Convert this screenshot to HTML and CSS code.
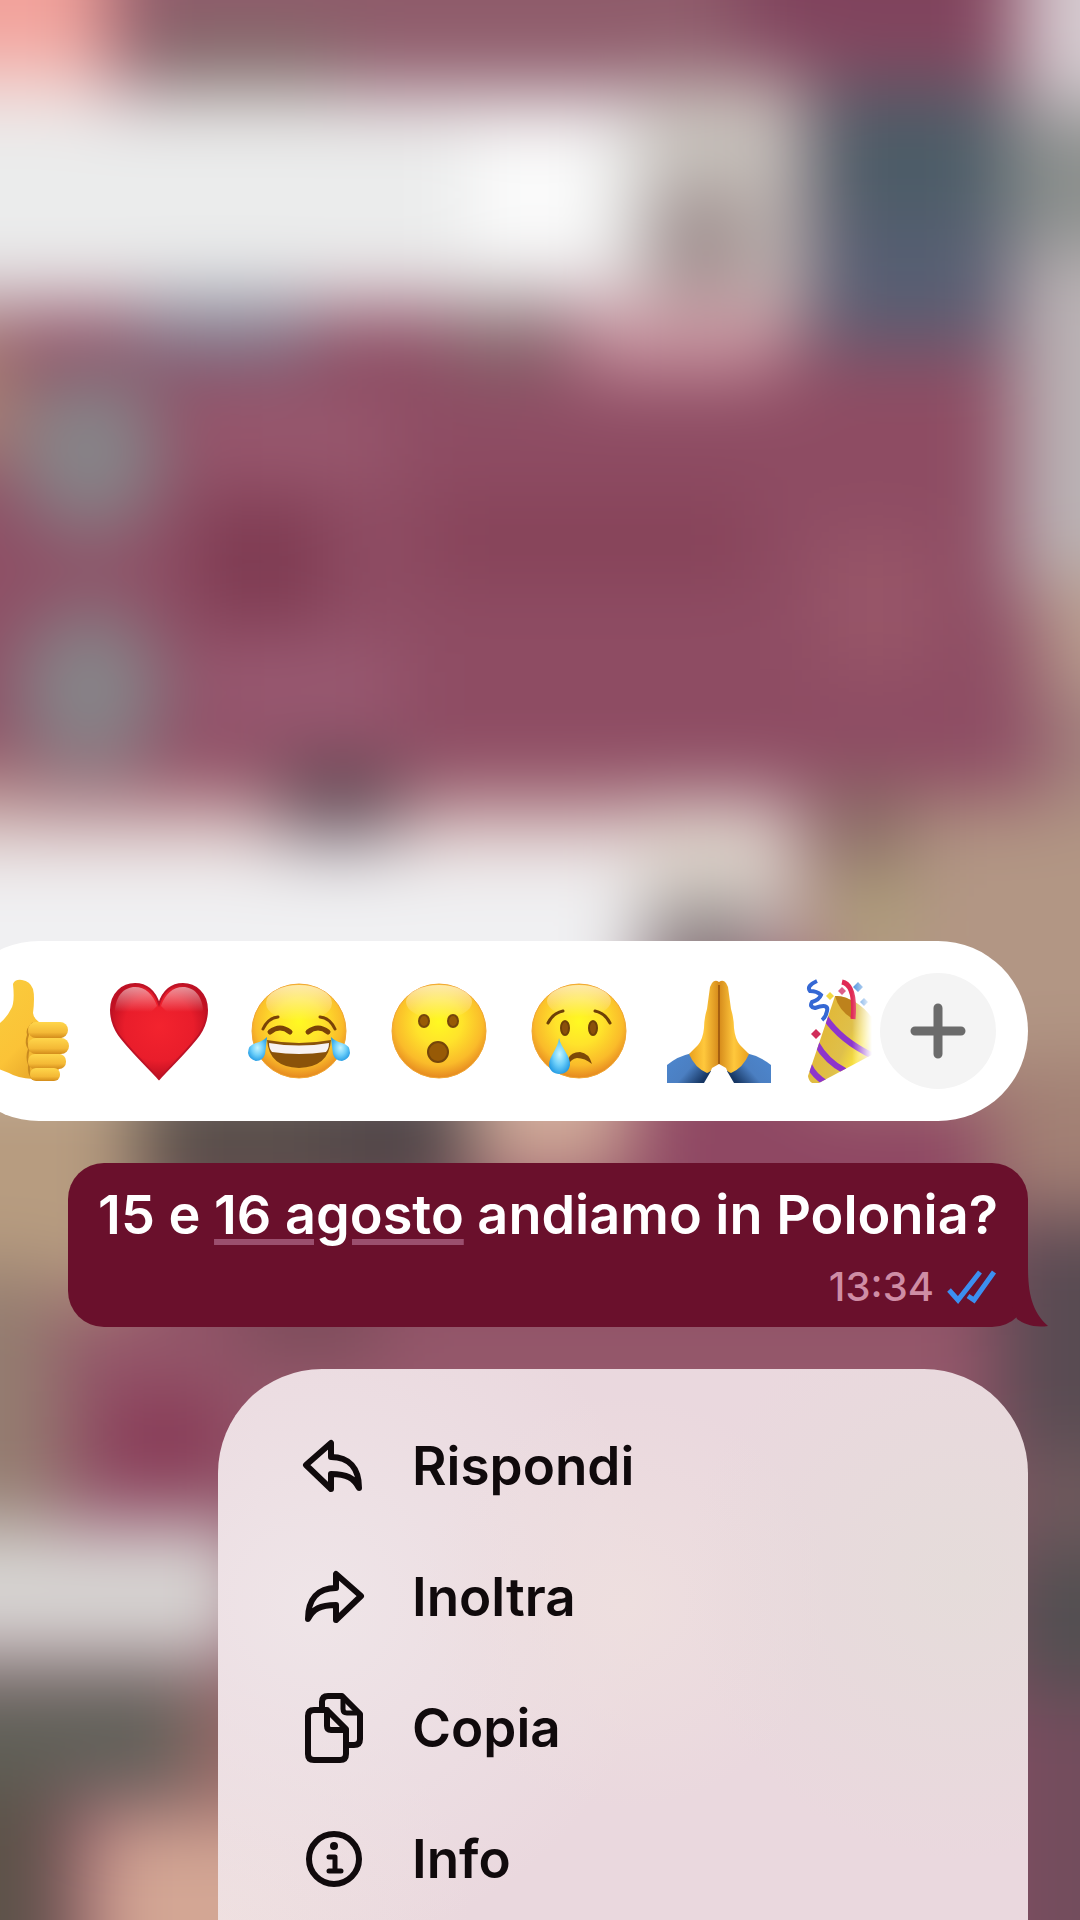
FILE: index.html
```html
<!DOCTYPE html>
<html lang="it">
	<head>
		<title>Chat</title>
		<meta charset="utf-8" />
		<meta name="viewport" content="width=device-width, initial-scale=1" />
		<link rel="stylesheet" href="styles.css">
	</head>
	<body>
		<!-- Blurred chat behind the overlay -->
		<svg class="backdrop" viewBox="0 0 1080 1920" preserveAspectRatio="none" aria-hidden="true">
			<defs>
				<filter id="blur" filterUnits="userSpaceOnUse" x="-200" y="-200" width="1480" height="2320" color-interpolation-filters="sRGB">
					<feGaussianBlur stdDeviation="38" />
				</filter>
			</defs>
			<rect width="1080" height="1920" fill="#8e4f65" />
			<g filter="url(#blur)">
				<rect x="-200" y="-200" width="1480" height="2320" fill="#8e4f65" />
				<rect x="-200" y="-200" width="1000" height="290" fill="#8f5c6b" />
				<rect x="150" y="30" width="190" height="70" fill="#806a68" />
				<rect x="740" y="-200" width="260" height="260" fill="#80435d" />
				<rect x="-200" y="-200" width="310" height="260" fill="#f2a19a" />
				<rect x="-200" y="60" width="310" height="60" fill="#f3c3bf" />
				<!-- first white card -->
				<rect x="-200" y="92" width="840" height="213" fill="#ebecec" />
				<rect x="470" y="130" width="130" height="125" fill="#fcfcfc" />
				<rect x="640" y="80" width="165" height="250" fill="#c8c3bd" />
				<ellipse cx="700" cy="240" rx="56" ry="56" fill="#9c8b8b" />
				<rect x="580" y="300" width="205" height="75" fill="#cb97a2" />
				<rect x="815" y="85" width="190" height="155" fill="#4c5c67" />
				<rect x="815" y="220" width="190" height="125" fill="#575f73" />
				<rect x="140" y="300" width="170" height="60" fill="#7e7c8e" />
				<rect x="450" y="305" width="110" height="80" fill="#86676c" />
				<!-- right edge -->
				<rect x="1020" y="-200" width="260" height="310" fill="#d6ccd1" />
				<rect x="1005" y="110" width="275" height="140" fill="#8b8f8d" />
				<rect x="1015" y="250" width="265" height="350" fill="#bbb4b6" />
				<rect x="1040" y="570" width="240" height="130" fill="#ba9f90" />
				<rect x="1045" y="690" width="235" height="130" fill="#a3827e" />
				<!-- maroon card -->
				<rect x="-200" y="330" width="215" height="130" fill="#ab8174" />
				<rect x="160" y="375" width="820" height="405" fill="#8e4c63" />
				<rect x="200" y="400" width="190" height="80" fill="#99596f" />
				<rect x="200" y="500" width="120" height="125" fill="#7e3a51" />
				<rect x="430" y="500" width="320" height="80" fill="#864258" />
				<rect x="200" y="640" width="200" height="90" fill="#995a72" />
				<rect x="820" y="540" width="110" height="130" fill="#995769" />
				<ellipse cx="90" cy="452" rx="74" ry="82" fill="#868589" />
				<ellipse cx="90" cy="690" rx="74" ry="82" fill="#868589" />
				<rect x="-200" y="770" width="230" height="50" fill="#b08a82" />
				<!-- second white card -->
				<rect x="-200" y="795" width="990" height="50" fill="#ccaba8" />
				<rect x="280" y="765" width="120" height="85" fill="#644d57" />
				<rect x="-200" y="840" width="840" height="230" fill="#f0f0f2" />
				<rect x="640" y="805" width="160" height="150" fill="#ded5cc" />
				<rect x="645" y="905" width="115" height="85" fill="#857c7e" />
				<rect x="815" y="800" width="465" height="290" fill="#b29684" />
				<rect x="820" y="785" width="90" height="85" fill="#896d66" />
				<rect x="835" y="870" width="70" height="75" fill="#afa478" />
				<!-- wallpaper and lower messages -->
				<rect x="-200" y="1060" width="340" height="240" fill="#b79c80" />
				<rect x="140" y="1060" width="320" height="150" fill="#594e4a" />
				<rect x="330" y="1060" width="140" height="120" fill="#504548" />
				<rect x="470" y="1060" width="160" height="120" fill="#d0a997" />
				<rect x="640" y="1090" width="330" height="130" fill="#8f4763" />
				<rect x="990" y="1060" width="290" height="150" fill="#a28074" />
				<rect x="-200" y="1270" width="260" height="270" fill="#947d70" />
				<rect x="70" y="1310" width="910" height="190" fill="#95586b" />
				<rect x="240" y="1290" width="140" height="65" fill="#774a57" />
				<rect x="100" y="1390" width="130" height="95" fill="#883b57" />
				<rect x="-200" y="1525" width="450" height="135" fill="#d8d6d4" />
				<rect x="-200" y="1675" width="420" height="120" fill="#61625a" />
				<rect x="190" y="1690" width="100" height="120" fill="#9a6b68" />
				<rect x="-200" y="1780" width="260" height="340" fill="#5c5349" />
				<rect x="90" y="1815" width="310" height="305" fill="#d3a694" />
				<rect x="1000" y="1220" width="280" height="230" fill="#584b52" />
				<rect x="1000" y="1450" width="280" height="100" fill="#6f595d" />
				<rect x="1000" y="1550" width="280" height="140" fill="#524f51" />
				<rect x="1000" y="1690" width="280" height="430" fill="#734d5d" />
			</g>
		</svg>

		<main class="overlay">
			<div class="reactions">
				<div class="emoji-strip">
					<button class="emoji" type="button" aria-label="Mi piace">
						<svg viewBox="0 0 104 104">
							<defs>
								<linearGradient id="hand" x1="0" y1="0" x2="1" y2="1">
									<stop offset="0" stop-color="#f9cf3f" />
									<stop offset=".6" stop-color="#fbc337" />
									<stop offset="1" stop-color="#dc9622" />
								</linearGradient>
								<linearGradient id="finger" x1="0" y1="0" x2="0" y2="1">
									<stop offset="0" stop-color="#ffd64b" />
									<stop offset=".65" stop-color="#f4b936" />
									<stop offset="1" stop-color="#d38c1b" />
								</linearGradient>
								<radialGradient id="face" cx=".5" cy=".4" r=".62">
									<stop offset="0" stop-color="#fff922" />
									<stop offset=".4" stop-color="#ffe32b" />
									<stop offset=".75" stop-color="#fabb2a" />
									<stop offset="1" stop-color="#e2801e" />
								</radialGradient>
								<linearGradient id="shine" x1="0" y1="0" x2="0" y2="1">
									<stop offset="0" stop-color="#fff" stop-opacity=".6" />
									<stop offset="1" stop-color="#fff" stop-opacity="0" />
								</linearGradient>
								<radialGradient id="tear" cx=".5" cy=".45" r=".6">
									<stop offset="0" stop-color="#c4f4ff" />
									<stop offset=".5" stop-color="#6fd0fa" />
									<stop offset="1" stop-color="#1f98e2" />
								</radialGradient>
							</defs>
							<path fill="url(#hand)" d="M46 5Q48 0 55 1Q63 2 66 10Q68 18 66 34Q67 40 72 43L96 44L92 90L84 101L66 100Q50 99 42 94L32 90L0 90V54L26 49Q38 42 44 30Q48 24 46 5Z" />
							<path fill="none" stroke="#c98a1f" stroke-width="2" d="M66 44Q59 50 61 56Q58 64 62 70Q59 78 62 86Q61 95 66 100" />
							<rect x="61" y="43" width="40" height="16" rx="8" fill="url(#finger)" />
							<rect x="61" y="59" width="41" height="16" rx="8" fill="url(#finger)" />
							<rect x="61" y="75" width="38" height="15" rx="7" fill="url(#finger)" />
							<rect x="63" y="89" width="30" height="13" rx="6" fill="url(#finger)" />
						</svg>
					</button>
					<button class="emoji" type="button" aria-label="Cuore">
						<svg viewBox="0 0 104 104">
							<defs>
								<radialGradient id="heart" cx=".5" cy=".45" r=".6">
									<stop offset="0" stop-color="#f3232e" />
									<stop offset=".6" stop-color="#e91d2b" />
									<stop offset="1" stop-color="#b00b1e" />
								</radialGradient>
							</defs>
							<path fill="url(#heart)" stroke="#bd1226" stroke-width="2" d="M52 100C40 87 23 71 12 56C6 47 4 39 4 31C4 14 16 5 28 5C40 5 48 13 52 25C56 13 64 5 76 5C88 5 100 14 100 31C100 39 98 47 92 56C81 71 64 87 52 100Z" />
							<path fill="url(#shine)" opacity=".9" d="M8 31C9 17 17 8 28 8C38 8 46 15 50 27L44 33H9Z" />
							<path fill="url(#shine)" opacity=".9" d="M96 31C95 17 87 8 76 8C66 8 58 15 54 27L60 33H95Z" />
						</svg>
					</button>
					<button class="emoji" type="button" aria-label="Risata">
						<svg viewBox="0 0 104 104">
							<circle cx="52" cy="52" r="47" fill="url(#face)" stroke="#f0a632" stroke-width="1" />
							<ellipse cx="52" cy="24" rx="33" ry="18" fill="url(#shine)" />
							<g fill="none" stroke="#7a4207" stroke-linecap="round">
								<path stroke-width="3" d="M16 50Q21 39 31 38M88 50Q83 39 73 38" />
								<path stroke-width="5" d="M23 53Q33 45 43 53M61 53Q71 45 81 53" />
							</g>
							<path fill="#8a5209" d="M20 61Q52 67 84 61Q82 88 52 89Q22 88 20 61Z" />
							<path fill="#f7f2f2" d="M22 64Q52 69 82 64Q82 70 79 73Q52 77 25 73Q22 70 22 64Z" />
							<path fill="url(#tear)" d="M20 58Q19 68 18 75Q16 82 9 82Q2 80 1 74Q1 66 9 64Q16 62 20 58Z" />
							<path fill="url(#tear)" d="M84 58Q85 68 86 75Q88 82 95 82Q102 80 103 74Q103 66 95 64Q88 62 84 58Z" />
						</svg>
					</button>
					<button class="emoji" type="button" aria-label="Sorpresa">
						<svg viewBox="0 0 104 104">
							<circle cx="52" cy="52" r="47" fill="url(#face)" stroke="#f0a632" stroke-width="1" />
							<ellipse cx="52" cy="23" rx="33" ry="17" fill="url(#shine)" />
							<g fill="#975a06" stroke="#75450a" stroke-width="2">
								<ellipse cx="37" cy="42" rx="5" ry="6" />
								<ellipse cx="66" cy="42" rx="5" ry="6" />
								<circle cx="51" cy="73" r="10" />
							</g>
						</svg>
					</button>
					<button class="emoji" type="button" aria-label="Triste">
						<svg viewBox="0 0 104 104">
							<circle cx="52" cy="52" r="47" fill="url(#face)" stroke="#f0a632" stroke-width="1" />
							<ellipse cx="52" cy="22" rx="32" ry="16" fill="url(#shine)" />
							<g fill="none" stroke="#6e4007" stroke-width="3" stroke-linecap="round">
								<path d="M21 44Q26 34 36 32M83 44Q78 34 68 32" />
							</g>
							<g fill="#8a500b" stroke="#6e4007" stroke-width="2">
								<ellipse cx="38" cy="49" rx="4" ry="7" />
								<ellipse cx="66" cy="49" rx="4" ry="7" />
							</g>
							<path fill="#7d4808" d="M41 80Q44 73 53 73Q62 74 65 85Q58 79 50 79Q44 80 41 86Z" />
							<path fill="url(#tear)" d="M32 59C34 69 44 77 43 86C42 92 38 95 32 95C27 95 22 91 22 86C22 77 31 70 32 59Z" />
						</svg>
					</button>
					<button class="emoji" type="button" aria-label="Grazie">
						<svg viewBox="0 0 104 104">
							<defs>
								<linearGradient id="palm" x1="0" y1="0" x2="1" y2="0">
									<stop offset="0" stop-color="#e9a01f" />
									<stop offset=".5" stop-color="#ffc83c" />
									<stop offset="1" stop-color="#d58a1b" />
								</linearGradient>
								<linearGradient id="sleeve" x1="0" y1="0" x2="1" y2=".6">
									<stop offset="0" stop-color="#4d87cf" />
									<stop offset=".6" stop-color="#4b7fc2" />
									<stop offset="1" stop-color="#173764" />
								</linearGradient>
								<g id="prayer-half">
									<path fill="url(#sleeve)" d="M0 86Q11 77 25 74L44 92L37 104H0Z" />
									<path fill="url(#palm)" d="M52 3Q48 0 45 4L43 8L40 30Q37 40 37 49Q36 60 31 66L22 75Q28 89 40 94Q44 93 45 89L52 85Z" />
								</g>
							</defs>
							<use href="#prayer-half" />
							<use href="#prayer-half" transform="matrix(-1 0 0 1 104 0)" />
							<path stroke="#a55f10" stroke-width="2" d="M52 6V85" />
						</svg>
					</button>
					<button class="emoji" type="button" aria-label="Festa">
						<svg viewBox="0 0 104 104">
							<defs>
								<linearGradient id="cone" x1="0" y1=".3" x2="1" y2=".8">
									<stop offset="0" stop-color="#e3b52f" />
									<stop offset=".5" stop-color="#dfc04b" />
									<stop offset=".7" stop-color="#fbe33c" />
									<stop offset="1" stop-color="#b08420" />
								</linearGradient>
								<clipPath id="cone-clip">
									<path d="M28 17Q50 18 66 40Q80 60 74 71L10 105Q2 105 1 97Z" />
								</clipPath>
							</defs>
							<path fill="url(#cone)" d="M28 17Q50 18 66 40Q80 60 74 71L10 105Q2 105 1 97Z" />
							<path fill="#bd821c" d="M28 17Q38 16 48 24L46 40Q32 32 28 17Z" />
							<g clip-path="url(#cone-clip)" fill="none" stroke="#8e35cc" stroke-width="6">
								<path d="M18 38Q34 62 68 78M9 64Q20 83 38 92M2 86Q7 97 19 104" />
							</g>
							<path fill="none" stroke="#3568d4" stroke-width="4" d="M10 2Q-1 7 3 12Q10 12 14 16Q12 21 5 23Q2 28 8 29Q22 24 20 32Q19 38 15 41" />
							<path fill="none" stroke="#e02a55" stroke-width="5" d="M35 3Q49 6 46 40" />
							<path fill="#f3d941" d="M23 13l4 4-4 4-4-4z" />
							<path fill="#dc5f88" d="M35 8l4 4-4 4-4-4z" />
							<path fill="#4a90dd" d="M51 3l5 5-5 5-5-5zM57 19l4 4-4 4-4-4z" />
							<path fill="#d02e5a" d="M9 50l5 5-5 5-5-5z" />
						</svg>
					</button>
				</div>
				<button class="more" type="button" aria-label="Altre reazioni">
					<svg viewBox="0 0 56 56">
						<path stroke="#6b6b6b" stroke-width="9" stroke-linecap="round" d="M28 5V51M5 28H51" />
					</svg>
				</button>
			</div>

			<div class="bubble">
				<p class="message">15 e <a class="date-link" href="#">16 agosto</a> andiamo in Polonia?</p>
				<div class="meta">
					<time class="time">13:34</time>
					<svg class="checks" viewBox="0 0 52 34">
						<path fill="none" stroke="#3c8ff0" stroke-width="5" d="M3 20L12 30L34 2M22 26L28 30L48 2" />
					</svg>
				</div>
				<svg class="tail" viewBox="0 0 36 60">
					<path fill="#6a102c" d="M16 0C16 26 20 45 36 59C22 61 12 57 5 52L0 40V0Z" />
				</svg>
			</div>

			<nav class="menu">
				<button class="menu-item" type="button">
					<svg class="icon" viewBox="0 -4 64 72">
						<path d="M4 31L29 9V23C47 23 57 34 57 54C52 44 45 40 29 40V55Z" />
					</svg>
					Rispondi
				</button>
				<button class="menu-item" type="button">
					<svg class="icon" viewBox="0 -4 64 72">
						<path d="M59 31L34 9V23C16 23 6 34 6 54C11 44 18 40 34 40V55Z" />
					</svg>
					Inoltra
				</button>
				<button class="menu-item" type="button">
					<svg class="icon" viewBox="0 -4 64 72">
						<path d="M12 14H25L44 33V58Q44 64 38 64H12Q6 64 6 58V20Q6 14 12 14ZM25 14V30Q25 34 29 34H44" />
						<path d="M20 13V6Q20 0 26 0H40L58 18V43Q58 49 52 49H45" />
						<path d="M41 1V13Q41 17 45 17H57" stroke-width="5" />
					</svg>
					Copia
				</button>
				<button class="menu-item" type="button">
					<svg class="icon" viewBox="0 -4 64 72">
						<circle cx="32" cy="32" r="25" />
						<circle class="dot" cx="32" cy="19" r="4" />
						<path d="M27 30H33V44M27 44H39" stroke-width="5" />
					</svg>
					Info
				</button>
			</nav>
		</main>
	</body>
</html>
```

FILE: styles.css
```css
* {
	padding: 0;
	margin: 0;
	box-sizing: border-box;
}

body {
	font-family: Inter, "Liberation Sans", sans-serif;
	font-weight: 600;
	background: #8e4f65;
	overflow: hidden;
}

button {
	font: inherit;
	color: inherit;
	background: none;
	border: none;
	cursor: pointer;
}

.backdrop {
	position: fixed;
	inset: 0;
	width: 100%;
	height: 100%;
	z-index: -1;
}

.overlay {
	height: 100vh;
	padding-top: 49vh;
	padding-right: 52px;

	display: flex;
	flex-direction: column;
	align-items: flex-end;
	gap: 42px;
}

/* Reactions */
.reactions {
	align-self: stretch;
	height: 180px;
	flex-shrink: 0;
	margin-left: -51px;
	padding-right: 32px;
	background: #fff;
	border-radius: 90px;
	overflow: hidden;

	display: flex;
	align-items: center;
	gap: 8px;
}

.emoji-strip {
	flex: 1;
	min-width: 0;
	display: flex;
	overflow: hidden;
	mask-image: linear-gradient(to right, #000 calc(100% - 20px), transparent);
}

.emoji {
	flex: 0 0 140px;
	display: flex;
	justify-content: center;
}

.emoji svg {
	width: 104px;
	height: 104px;
	overflow: visible;
}

.more {
	flex-shrink: 0;
	width: 116px;
	height: 116px;
	border-radius: 50%;
	background: #f4f4f4;

	display: flex;
	align-items: center;
	justify-content: center;
}

.more svg {
	width: 56px;
	height: 56px;
}

/* Message */
.bubble {
	position: relative;
	flex-shrink: 0;
	padding: 20px 30px;
	background: #6a102c;
	color: #fff;
	border-radius: 36px;
}

.message {
	font-size: 54px;
	line-height: 64px;
}

.date-link {
	color: inherit;
	text-decoration: underline;
	text-decoration-color: #9b4f6e;
	text-decoration-thickness: 6px;
	text-underline-offset: 5px;
}

.meta {
	margin-top: 20px;
	display: flex;
	align-items: center;
	justify-content: flex-end;
	gap: 12px;
}

.time {
	font-size: 40px;
	font-weight: 500;
	line-height: 40px;
	color: #cf8da5;
}

.checks {
	width: 52px;
	height: 34px;
}

.tail {
	position: absolute;
	right: -20px;
	bottom: 0;
	width: 36px;
	height: 60px;
}

/* Menu */
.menu {
	flex: 1 0 auto;
	width: 75vw;
	padding: 32px 84px 0;
	border-radius: 104px 104px 0 0;
	color: #100a0c;
	background:
		radial-gradient(circle at 92% 38%, #e5dcda, transparent 34%),
		radial-gradient(circle at 50% 42%, #eedfdf, transparent 40%),
		radial-gradient(circle at 12% 42%, #efe5e8, transparent 44%),
		radial-gradient(circle at 0% 100%, #efe0e0, transparent 26%),
		#ead8de;

	display: flex;
	flex-direction: column;
}

.menu-item {
	height: 131px;
	font-size: 53px;
	text-align: left;

	display: flex;
	align-items: center;
	gap: 46px;
}

.icon {
	width: 64px;
	height: 72px;
	fill: none;
	stroke: currentColor;
	stroke-width: 6;
	stroke-linejoin: round;
	stroke-linecap: round;
}

.icon .dot {
	fill: currentColor;
	stroke: none;
}
```
